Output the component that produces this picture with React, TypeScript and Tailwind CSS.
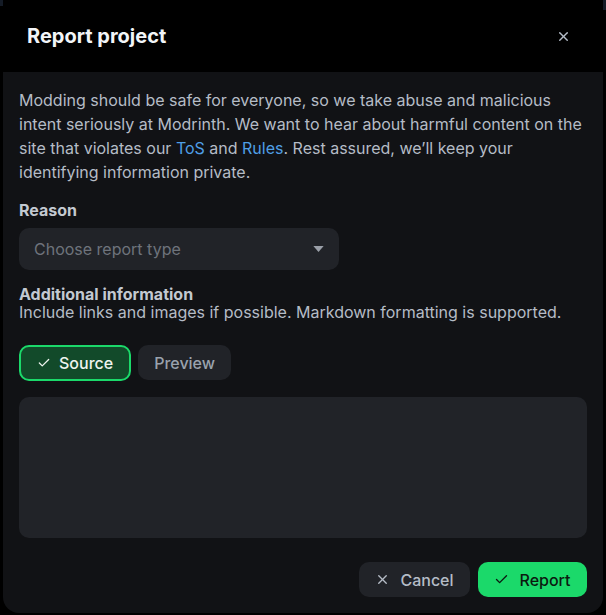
import React from "react";

const Check = ({ className = "" }: { className?: string }) => (
  <svg viewBox="0 0 24 24" fill="none" stroke="currentColor" strokeWidth={2.2} strokeLinecap="round" strokeLinejoin="round" className={className}>
    <path d="M20 6 9 17l-5-5" />
  </svg>
);

const XIcon = ({ className = "" }: { className?: string }) => (
  <svg viewBox="0 0 24 24" fill="none" stroke="currentColor" strokeWidth={2.2} strokeLinecap="round" strokeLinejoin="round" className={className}>
    <path d="M18 6 6 18" />
    <path d="m6 6 12 12" />
  </svg>
);

export default function App() {
  return (
    <div className="relative w-[606px] h-[615px] bg-black overflow-hidden" style={{ fontFamily: "Inter, 'Noto Sans', sans-serif" }}>
      <div className="absolute -top-[40px] -left-[20px] w-[40px] h-[46px] rounded-[14px] bg-[#141b26]" />
      <div className="absolute -top-[30px] left-[560px] w-[80px] h-[40px] rounded-[20px] bg-[#141b26]" />
      <div className="relative ml-[3px] w-[600px] h-[613px] flex flex-col rounded-b-[16px] overflow-hidden">
        <div className="h-[72px] bg-black flex items-center justify-between pl-6 pr-6 shrink-0">
          <h1 className="text-[20px] font-bold text-[#f2f5f8] leading-none">Report project</h1>
          <button className="w-8 h-8 flex items-center justify-center text-[#b4bcc7]">
            <XIcon className="w-[15px] h-[15px]" />
          </button>
        </div>
        <div className="flex-1 bg-[#111215] px-4 pt-4 pb-4 flex flex-col">
          <p className="text-[16px] leading-6 text-[#b5bcc6]">
            Modding should be safe for everyone, so we take abuse and malicious intent seriously at Modrinth. We want to hear about harmful content on the site that violates our{" "}
            <span className="text-[#4f9fe6]">ToS</span> and <span className="text-[#4f9fe6]">Rules</span>. Rest assured, we’ll keep your identifying information private.
          </p>
          <div className="mt-4 text-[16px] leading-5 font-bold text-[#c3c9d1]">Reason</div>
          <div className="mt-2 w-[320px] h-[42px] rounded-[10px] bg-[#212328] flex items-center justify-between pl-[15px] pr-[15px]">
            <span className="text-[16px] text-[#6e737c]">Choose report type</span>
            <svg viewBox="0 0 12 7" className="w-[11px] h-[6px]"><path d="M0 0h12L6 7z" fill="#9a9fa8" /></svg>
          </div>
          <div className="mt-[15px] text-[16px] leading-[18px] font-bold text-[#c3c9d1]">Additional information</div>
          <div className="text-[16px] leading-[18px] text-[#b5bcc6]">Include links and images if possible. Markdown formatting is supported.</div>
          <div className="mt-6 flex gap-[7px]">
            <button className="h-9 px-4 rounded-[10px] border-2 border-[#1bd96a] bg-[#124a2a] flex items-center gap-2 text-[16px] font-medium text-[#eef4ef]">
              <Check className="w-[14px] h-[14px]" />
              Source
            </button>
            <button className="h-[35px] px-4 rounded-[10px] bg-[#212328] text-[16px] font-medium text-[#9aa2ad]">Preview</button>
          </div>
          <div className="mt-4 h-[141px] w-full rounded-[10px] bg-[#212328]" />
          <div className="mt-6 flex justify-end gap-2">
            <button className="h-[35px] w-[111px] justify-center rounded-[10px] bg-[#212328] flex items-center gap-[10px] text-[16px] font-medium text-[#b5bcc6]">
              <XIcon className="w-[15px] h-[15px]" />
              Cancel
            </button>
            <button className="h-[35px] w-[109px] justify-center rounded-[10px] bg-[#1bd96a] flex items-center gap-[10px] text-[16px] font-medium text-[#0b1a10]">
              <Check className="w-[15px] h-[15px]" />
              Report
            </button>
          </div>
        </div>
      </div>
    </div>
  );
}
